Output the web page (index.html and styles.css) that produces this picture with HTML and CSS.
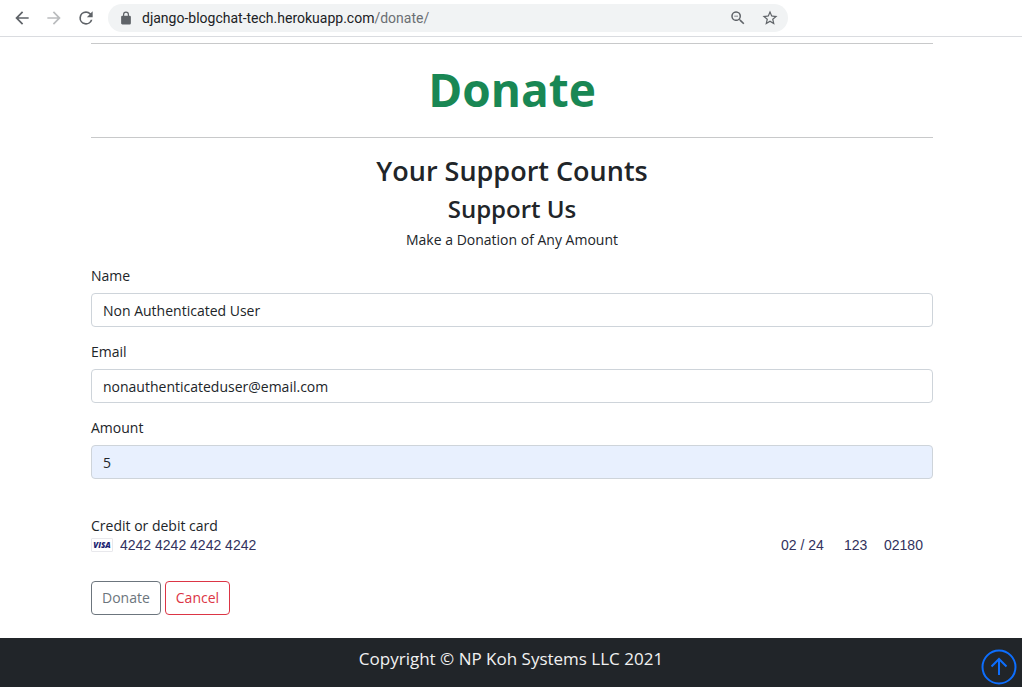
FILE: index.html
```html
<!DOCTYPE html>
<html lang="en">
<head>
<meta charset="utf-8">
<title>Donate</title>
<link rel="stylesheet" href="styles.css">
</head>
<body>
<header class="toolbar">
  <button class="tool back" aria-label="Back"><svg width="20" height="20" viewBox="0 0 24 24"><path d="M20 11H7.83l5.59-5.59L12 4l-8 8 8 8 1.41-1.41L7.83 13H20z"/></svg></button>
  <button class="tool forward" aria-label="Forward"><svg width="20" height="20" viewBox="0 0 24 24"><path d="M12 4l-1.41 1.41L16.17 11H4v2h12.17l-5.58 5.59L12 20l8-8z"/></svg></button>
  <button class="tool reload" aria-label="Reload"><svg width="20" height="20" viewBox="0 0 24 24"><path d="M17.65 6.35A7.96 7.96 0 0 0 12 4a8 8 0 1 0 7.73 10h-2.08A6 6 0 1 1 12 6c1.66 0 3.14.69 4.22 1.78L13 11h7V4z"/></svg></button>
  <div class="address">
    <svg class="lock" width="14" height="14" viewBox="2 0 20 23"><path d="M18 8h-1V6A5 5 0 0 0 7 6v2H6a2 2 0 0 0-2 2v10c0 1.100.9 2 2 2h12a2 2 0 0 0 2-2V10a2 2 0 0 0-2-2zM9 6a3 3 0 0 1 6 0v2H9z"/></svg>
    <span class="url">django-blogchat-tech.herokuapp.com<span class="path">/donate/</span></span>
    <button class="tool" aria-label="Zoom"><svg width="18" height="18" viewBox="0 0 24 24"><path d="M15.500 14h-.79l-.28-.27A6.500 6.500 0 1 0 13.730 14.430l.27.28v.79l5 4.990L20.490 19zm-6 0a4.500 4.500 0 1 1 0-9 4.500 4.500 0 0 1 0 9zM7 9h5v1H7z"/></svg></button>
    <button class="tool" aria-label="Bookmark"><svg width="18" height="18" viewBox="0 0 24 24"><path d="M22 9.240l-7.190-.62L12 2 9.190 8.630 2 9.240l5.460 4.730L5.820 21 12 17.270 18.180 21l-1.630-7.030zM12 15.400l-3.760 2.270 1-4.280-3.320-2.880 4.380-.38L12 6.100l1.710 4.040 4.380.38-3.320 2.880 1 4.280z"/></svg></button>
  </div>
</header>
<main class="content">
  <h1 class="title">Donate</h1>
  <h2 class="heading">Your Support Counts</h2>
  <h3 class="subheading">Support Us</h3>
  <p class="lead">Make a Donation of Any Amount</p>
  <form class="form">
    <div class="field">
      <label for="name">Name</label>
      <input id="name" class="control" type="text" value="Non Authenticated User">
    </div>
    <div class="field">
      <label for="email">Email</label>
      <input id="email" class="control" type="email" value="nonauthenticateduser@email.com">
    </div>
    <div class="field">
      <label for="amount">Amount</label>
      <input id="amount" class="control filled" type="text" value="5">
    </div>
    <div class="card">
      <label for="card">Credit or debit card</label>
      <div class="card-row">
        <span class="visa">VISA</span>
        <input id="card" class="card-input number" type="text" value="4242 4242 4242 4242">
        <input class="card-input expiry" type="text" aria-label="Expiry" value="02 / 24">
        <input class="card-input cvc" type="text" aria-label="CVC" value="123">
        <input class="card-input zip" type="text" aria-label="ZIP" value="02180">
      </div>
    </div>
    <div class="actions">
      <button class="btn" type="button">Donate</button>
      <button class="btn cancel" type="button">Cancel</button>
    </div>
  </form>
</main>
<footer class="footer">
  <p class="copyright">Copyright © NP Koh Systems LLC 2021</p>
  <a class="to-top" href="#" aria-label="Back to top"><svg width="36" height="36" viewBox="0 0 36 36"><circle cx="18" cy="18" r="16.500"/><path d="M18 26V10M10.500 17.500L18 10l7.500 7.500"/></svg></a>
</footer>
</body>
</html>
```
FILE: styles.css
```css
* { box-sizing: border-box; }
body {
  margin: 0;
  min-height: 100vh;
  display: flex;
  flex-direction: column;
  background: #fff;
  color: #212529;
  font: 14px/20px "Segoe UI", "Open Sans", "Noto Sans", sans-serif;
}
button { font: inherit; }
.toolbar {
  display: flex;
  align-items: center;
  gap: 12px;
  height: 37px;
  padding: 0 12px;
  border-bottom: 1px solid #dadce0;
}
.tool {
  display: flex;
  padding: 0;
  border: 0;
  background: none;
}
.tool svg, .lock { fill: #5f6368; }
.forward svg { fill: #babcbe; }
.address {
  display: flex;
  align-items: center;
  gap: 14px;
  width: 680px;
  height: 28px;
  padding: 0 9px 0 11px;
  border-radius: 14px;
  background: #f1f3f4;
}
.url {
  flex: 1;
  margin-left: -5px;
  color: #202124;
  font-family: "Segoe UI", Roboto, sans-serif;
}
.path { color: #6b6f73; }
.content {
  flex: 1;
  padding: 6px 89px 23px 91px;
}
.title {
  margin: 0 0 15px;
  padding: 15px 0 17px;
  border: solid #c8c9ca;
  border-width: 1px 0;
  color: #198754;
  font-size: 46px;
  line-height: 61px;
  text-align: center;
}
.heading, .subheading {
  margin: 0;
  font-weight: 600;
  text-align: center;
}
.heading { font-size: 27px; line-height: 36px; }
.subheading { margin-top: 4px; font-size: 24px; line-height: 32px; }
.lead { margin: 5px 0 16px; text-align: center; }
.field {
  display: flex;
  flex-direction: column;
  gap: 7px;
  margin-bottom: 15px;
}
.control {
  width: 100%;
  height: 34px;
  padding: 0 11px;
  border: 1px solid #ced4da;
  border-radius: 4px;
  background: #fff;
  color: #212529;
  font: inherit;
}
.filled { background: #e8f0fe; }
.card { padding-top: 22px; }
.card-row {
  display: flex;
  align-items: center;
  height: 18px;
}
.visa {
  width: 22px;
  margin-right: 7px;
  border: 1px solid #e8e8ec;
  border-radius: 1px;
  color: #1a1f71;
  font: italic 800 8px/12px "Open Sans", sans-serif;
  text-align: center;
}
.card-input {
  padding: 0;
  border: 0;
  background: none;
  color: #32325d;
  font: 14px/18px "Liberation Sans", Arial, sans-serif;
}
.number { flex: 1; }
.expiry { width: 63px; }
.cvc { width: 40px; }
.zip { width: 49px; }
.actions {
  display: flex;
  gap: 4px;
  margin-top: 27px;
}
.btn {
  height: 34px;
  padding: 0 10px;
  border: 1px solid #6c757d;
  border-radius: 4px;
  background: #fff;
  color: #6c757d;
}
.cancel { border-color: #dc3545; color: #dc3545; }
.footer {
  position: relative;
  height: 49px;
  padding-top: 8px;
  background: #212529;
  color: #f1f1f1;
}
.copyright {
  margin: 0;
  font-size: 17px;
  line-height: 26px;
  text-align: center;
}
.to-top {
  position: absolute;
  right: 5px;
  bottom: 2px;
  display: flex;
}
.to-top svg { fill: none; stroke: #0d6efd; stroke-width: 2; }
```
